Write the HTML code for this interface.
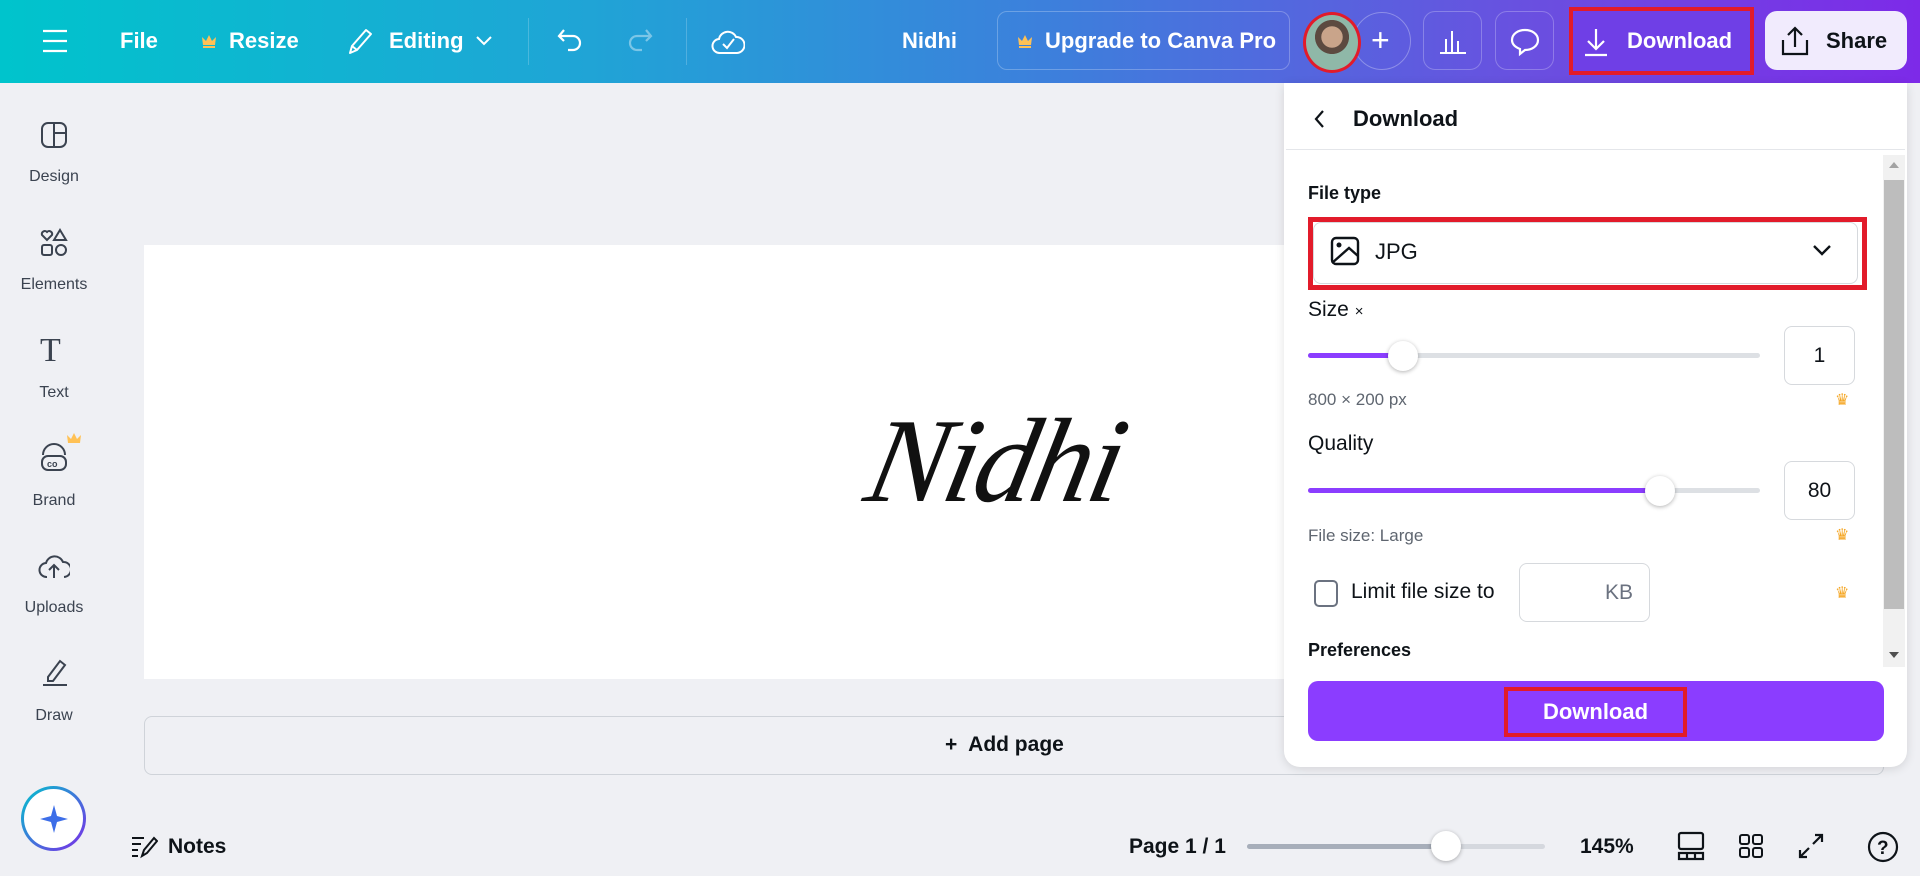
<!DOCTYPE html>
<html><head><meta charset="utf-8"><style>
*{box-sizing:border-box;margin:0;padding:0}
body{width:1920px;height:876px;overflow:hidden;background:#eff0f4;font-family:"Liberation Sans",sans-serif;position:relative;color:#0e1318}
.a{position:absolute}
.top{left:0;top:0;width:1920px;height:83px;background:linear-gradient(90deg,#00c4cc 0%,#1fa5d6 30%,#3d7fdc 55%,#6a4fe0 80%,#7d2ae8 100%)}
.tt{color:#fff;font-size:22px;font-weight:bold;top:28px}
.obtn{border:1px solid rgba(255,255,255,.25);border-radius:10px}
.side{left:0;top:83px;width:108px;height:793px;background:#eff0f4}
.sl{font-size:16px;color:#3b4350;width:108px;text-align:center;left:0}
.lab{font-size:18px;color:#0e1318;left:1308px}
.track{height:5px;background:#dde0e4;border-radius:3px}
.fill{height:5px;background:#8b3dff;border-radius:3px}
.thumb{width:30px;height:30px;border-radius:50%;background:#fff;box-shadow:0 1px 4px rgba(0,0,0,.3)}
.box{border:1px solid #d6d9dd;border-radius:8px;background:#fff;font-size:21px;text-align:center}
.crown{color:#f5a623;font-size:16px}
</style></head><body>
<div class="a top"></div>
<svg class="a" style="left:42px;top:29px" width="26" height="24"><path d="M1 2h24M1 12h24M1 22h24" stroke="#fff" stroke-width="2.2"/></svg>
<div class="a tt" style="left:120px">File</div>
<svg class="a" style="left:201px;top:33px" width="16" height="16"><path d="M1 4l4 4 3-6 3 6 4-4-1 8H2z" fill="#ffc155"/><rect x="2" y="13" width="12" height="2" fill="#ffc155"/></svg>
<div class="a tt" style="left:229px">Resize</div>
<svg class="a" style="left:346px;top:27px" width="28" height="30"><path d="M4 26l2-7 14-16 5 4-14 16z M6 19l5 4" stroke="#fff" stroke-width="2" fill="none" stroke-linejoin="round"/></svg>
<div class="a tt" style="left:389px">Editing</div>
<svg class="a" style="left:474px;top:34px" width="20" height="14"><path d="M3 3l7 7 7-7" stroke="#fff" stroke-width="2" fill="none"/></svg>
<div class="a" style="left:528px;top:18px;width:1px;height:47px;background:rgba(255,255,255,.2)"></div>
<svg class="a" style="left:556px;top:27px" width="30" height="28"><path d="M8 3L3 9l5 5M3 9h14a7 7 0 010 14h-5" stroke="#fff" stroke-width="2.2" fill="none"/></svg>
<svg class="a" style="left:624px;top:27px" width="30" height="28"><path d="M22 3l5 6-5 5M27 9H13a7 7 0 000 14h5" stroke="rgba(255,255,255,.4)" stroke-width="2.2" fill="none"/></svg>
<div class="a" style="left:686px;top:18px;width:1px;height:47px;background:rgba(255,255,255,.2)"></div>
<svg class="a" style="left:711px;top:26px" width="34" height="30"><path d="M9 27a7 7 0 01-1-14 9 9 0 0117-2 7 7 0 011 16z" stroke="#fff" stroke-width="2" fill="none"/><path d="M12 18l4 4 7-9" stroke="#fff" stroke-width="2" fill="none"/></svg>
<div class="a tt" style="left:902px">Nidhi</div>
<div class="a obtn" style="left:997px;top:11px;width:293px;height:59px"></div>
<svg class="a" style="left:1017px;top:33px" width="16" height="16"><path d="M1 4l4 4 3-6 3 6 4-4-1 8H2z" fill="#ffc155"/><rect x="2" y="13" width="12" height="2" fill="#ffc155"/></svg>
<div class="a tt" style="left:1045px">Upgrade to Canva Pro</div>
<div class="a" style="left:1353px;top:12px;width:58px;height:58px;border-radius:50%;border:1px solid rgba(255,255,255,.3)"></div>
<div class="a tt" style="left:1371px;top:22px;font-size:32px;font-weight:normal">+</div>
<div class="a" style="left:1303px;top:12px;width:58px;height:61px;border-radius:50%;border:3px solid #e21b2a;background:radial-gradient(circle at 50% 40%,#c9a48a 0 25%,#5c4a40 26% 40%,#8fb8a8 41%)"></div>
<div class="a obtn" style="left:1423px;top:11px;width:59px;height:59px;border-radius:12px"></div>
<svg class="a" style="left:1438px;top:27px" width="30" height="28"><path d="M2 26h26M8 26V12M14 26V4M20 26V14" stroke="#fff" stroke-width="2"/></svg>
<div class="a obtn" style="left:1495px;top:11px;width:59px;height:59px;border-radius:12px"></div>
<svg class="a" style="left:1509px;top:27px" width="32" height="30"><path d="M16 3c7 0 13 4 13 10s-6 10-13 10l-5 4v-5C6 20 3 17 3 13 3 7 9 3 16 3z" stroke="#fff" stroke-width="2.2" fill="none"/></svg>
<div class="a" style="left:1569px;top:7px;width:185px;height:68px;border:4px solid #e21b2a;background:#6f3fe6"></div>
<svg class="a" style="left:1582px;top:27px" width="28" height="30"><path d="M14 2v20M6 14l8 8 8-8M3 28h22" stroke="#fff" stroke-width="2.2" fill="none"/></svg>
<div class="a tt" style="left:1627px">Download</div>
<div class="a" style="left:1765px;top:11px;width:142px;height:59px;border-radius:12px;background:#f1ebfd"></div>
<svg class="a" style="left:1780px;top:25px" width="30" height="32"><path d="M15 22V3M8 10l7-7 7 7M3 15v14h24V15" stroke="#0e1318" stroke-width="2.2" fill="none"/></svg>
<div class="a tt" style="left:1826px;color:#0e1318">Share</div>

<div class="a side"></div>
<svg class="a" style="left:40px;top:121px" width="28" height="28"><rect x="2" y="2" width="24" height="24" rx="6" stroke="#3b4350" stroke-width="2" fill="none"/><path d="M14 2v24M14 12h12" stroke="#3b4350" stroke-width="2"/></svg>
<div class="a sl" style="top:168px">Design</div>
<svg class="a" style="left:39px;top:228px" width="30" height="30"><path d="M8 12l-5-5a3 3 0 015-3 3 3 0 015 3z" stroke="#3b4350" stroke-width="2" fill="none"/><path d="M21 2l6 10H15z" stroke="#3b4350" stroke-width="2" fill="none"/><rect x="3" y="17" width="10" height="10" rx="2" stroke="#3b4350" stroke-width="2" fill="none"/><circle cx="22" cy="22" r="5" stroke="#3b4350" stroke-width="2" fill="none"/></svg>
<div class="a sl" style="top:276px">Elements</div>
<div class="a" style="left:40px;top:332px;font-size:34px;font-family:'Liberation Serif',serif;color:#3b4350">T</div>
<div class="a sl" style="top:384px">Text</div>
<svg class="a" style="left:39px;top:443px" width="30" height="30"><path d="M4 12a11 11 0 0122 0" stroke="#3b4350" stroke-width="2" fill="none"/><rect x="3" y="13" width="24" height="14" rx="6" stroke="#3b4350" stroke-width="2" fill="none"/><text x="8" y="24" font-size="9" font-family="Liberation Sans" font-weight="bold" fill="#3b4350">co</text></svg>
<svg class="a" style="left:66px;top:432px" width="16" height="14"><path d="M1 3l4 4 3-6 3 6 4-4-1 8H2z" fill="#ffc155"/></svg>
<div class="a sl" style="top:492px">Brand</div>
<svg class="a" style="left:38px;top:551px" width="32" height="30"><path d="M9 26a7 7 0 01-1-14 9 9 0 0117-1 7 7 0 011 15" stroke="#3b4350" stroke-width="2" fill="none"/><path d="M16 27V15M11 19l5-5 5 5" stroke="#3b4350" stroke-width="2" fill="none"/></svg>
<div class="a sl" style="top:599px">Uploads</div>
<svg class="a" style="left:40px;top:657px" width="30" height="32"><path d="M8 20L20 4l5 4-12 16H8z" stroke="#3b4350" stroke-width="2" fill="none"/><path d="M3 28h24" stroke="#3b4350" stroke-width="2"/></svg>
<div class="a sl" style="top:707px">Draw</div>
<div class="a" style="left:21px;top:786px;width:65px;height:65px;border-radius:50%;background:linear-gradient(135deg,#00c4cc,#7d2ae8);padding:3px"><div style="width:100%;height:100%;border-radius:50%;background:#fff"></div></div>
<svg class="a" style="left:38px;top:803px" width="32" height="32"><path d="M16 2l3 11 11 3-11 3-3 11-3-11-11-3 11-3z" fill="#3d6ee8"/></svg>

<div class="a" style="left:144px;top:245px;width:1740px;height:434px;background:#fff"></div>
<div class="a" style="left:870px;top:392px;font-family:'Liberation Serif',serif;font-style:italic;font-size:120px;color:#111;letter-spacing:-3px;transform:skewX(-12deg)">Nidhi</div>
<div class="a" style="left:144px;top:716px;width:1740px;height:59px;border:1px solid #cfd3d9;border-radius:8px"></div>
<div class="a" style="left:945px;top:733px;font-size:21px;font-weight:bold">+&nbsp; Add page</div>

<svg class="a" style="left:130px;top:834px" width="28" height="26"><path d="M2 4h12M2 10h9M2 16h6M2 22h6M12 22l2-6 10-12 3 3-10 12z" stroke="#0e1318" stroke-width="2" fill="none"/></svg>
<div class="a" style="left:168px;top:835px;font-size:21px;font-weight:bold">Notes</div>
<div class="a" style="left:1129px;top:835px;font-size:21px;font-weight:bold">Page 1 / 1</div>
<div class="a" style="left:1247px;top:844px;width:298px;height:5px;background:#d5d8de;border-radius:3px"></div>
<div class="a" style="left:1247px;top:844px;width:198px;height:5px;background:#a7aeba;border-radius:3px"></div>
<div class="a thumb" style="left:1431px;top:831px"></div>
<div class="a" style="left:1580px;top:835px;font-size:21px;font-weight:bold">145%</div>
<svg class="a" style="left:1677px;top:831px" width="28" height="30"><rect x="2" y="2" width="24" height="16" rx="2" stroke="#0e1318" stroke-width="2.2" fill="none"/><path d="M2 22h24v6H2zM10 22v6M18 22v6" stroke="#0e1318" stroke-width="2.2" fill="none"/></svg>
<svg class="a" style="left:1738px;top:833px" width="26" height="26"><rect x="2" y="2" width="9" height="9" rx="2" stroke="#0e1318" stroke-width="2" fill="none"/><rect x="15" y="2" width="9" height="9" rx="2" stroke="#0e1318" stroke-width="2" fill="none"/><rect x="2" y="15" width="9" height="9" rx="2" stroke="#0e1318" stroke-width="2" fill="none"/><rect x="15" y="15" width="9" height="9" rx="2" stroke="#0e1318" stroke-width="2" fill="none"/></svg>
<svg class="a" style="left:1798px;top:833px" width="26" height="26"><path d="M15 11l9-9M17 2h7v7M11 15l-9 9M2 17v7h7" stroke="#0e1318" stroke-width="2.2" fill="none"/></svg>
<svg class="a" style="left:1867px;top:831px" width="32" height="32"><circle cx="16" cy="16" r="14" stroke="#0e1318" stroke-width="2.2" fill="none"/><text x="10" y="23" font-size="19" font-family="Liberation Sans" font-weight="bold" fill="#0e1318">?</text></svg>

<div class="a" style="left:1284px;top:83px;width:623px;height:684px;background:#fff;border-radius:0 0 16px 16px;box-shadow:0 2px 10px rgba(0,0,0,.12)"></div>
<svg class="a" style="left:1312px;top:108px" width="16" height="22"><path d="M11 3l-7 8 7 8" stroke="#0e1318" stroke-width="2.2" fill="none"/></svg>
<div class="a" style="left:1353px;top:106px;font-size:22px;font-weight:bold">Download</div>
<div class="a" style="left:1286px;top:149px;width:619px;height:1px;background:#e4e6ea"></div>
<div class="a" style="left:1883px;top:155px;width:22px;height:512px;background:#f1f1f1"></div>
<div class="a" style="left:1884px;top:180px;width:20px;height:429px;background:#bdbdbd"></div>
<svg class="a" style="left:1888px;top:160px" width="12" height="10"><path d="M1 8l5-6 5 6z" fill="#a3a3a3"/></svg>
<svg class="a" style="left:1888px;top:650px" width="12" height="10"><path d="M1 2l5 6 5-6z" fill="#505050"/></svg>

<div class="a lab" style="top:183px;font-weight:bold">File type</div>
<div class="a" style="left:1308px;top:217px;width:559px;height:73px;border:5px solid #e21b2a"></div>
<div class="a" style="left:1313px;top:222px;width:545px;height:62px;border:1px solid #d6d9dd;border-radius:8px"></div>
<svg class="a" style="left:1330px;top:236px" width="30" height="30"><rect x="2" y="2" width="26" height="26" rx="4" stroke="#0e1318" stroke-width="2.4" fill="none"/><circle cx="9" cy="9" r="2.5" fill="#0e1318"/><path d="M2 27l17-15 9 8" stroke="#0e1318" stroke-width="2.4" fill="none"/></svg>
<div class="a" style="left:1375px;top:239px;font-size:22px">JPG</div>
<svg class="a" style="left:1812px;top:243px" width="20" height="14"><path d="M2 3l8 8 8-8" stroke="#0e1318" stroke-width="2.4" fill="none"/></svg>

<div class="a lab" style="top:298px;font-size:21px">Size <span style="font-size:15px">×</span></div>
<div class="a track" style="left:1308px;top:353px;width:452px"></div>
<div class="a fill" style="left:1308px;top:353px;width:95px"></div>
<div class="a thumb" style="left:1388px;top:341px"></div>
<div class="a box" style="left:1784px;top:326px;width:71px;height:59px;line-height:57px">1</div>
<div class="a lab" style="top:390px;font-size:17px;color:#5f6670">800 × 200 px</div>
<div class="a crown" style="left:1835px;top:390px">♛</div>

<div class="a lab" style="top:432px;font-size:21px">Quality</div>
<div class="a track" style="left:1308px;top:488px;width:452px"></div>
<div class="a fill" style="left:1308px;top:488px;width:350px"></div>
<div class="a thumb" style="left:1645px;top:476px"></div>
<div class="a box" style="left:1784px;top:461px;width:71px;height:59px;line-height:57px">80</div>
<div class="a lab" style="top:526px;font-size:17px;color:#5f6670">File size: Large</div>
<div class="a crown" style="left:1835px;top:525px">♛</div>

<div class="a" style="left:1314px;top:580px;width:24px;height:27px;border:2px solid #6b7280;border-radius:5px"></div>
<div class="a" style="left:1351px;top:580px;font-size:21px">Limit file size to</div>
<div class="a box" style="left:1519px;top:563px;width:131px;height:59px;line-height:57px;text-align:right;padding-right:16px;color:#6b7280">KB</div>
<div class="a crown" style="left:1835px;top:583px">♛</div>
<div class="a lab" style="top:640px;font-weight:bold">Preferences</div>

<div class="a" style="left:1308px;top:681px;width:576px;height:60px;border-radius:10px;background:#8b3dff"></div>
<div class="a" style="left:1504px;top:687px;width:183px;height:50px;border:4px solid #e21b2a"></div>
<div class="a" style="left:1504px;top:699px;width:183px;text-align:center;color:#fff;font-size:22px;font-weight:bold">Download</div>
</body></html>
